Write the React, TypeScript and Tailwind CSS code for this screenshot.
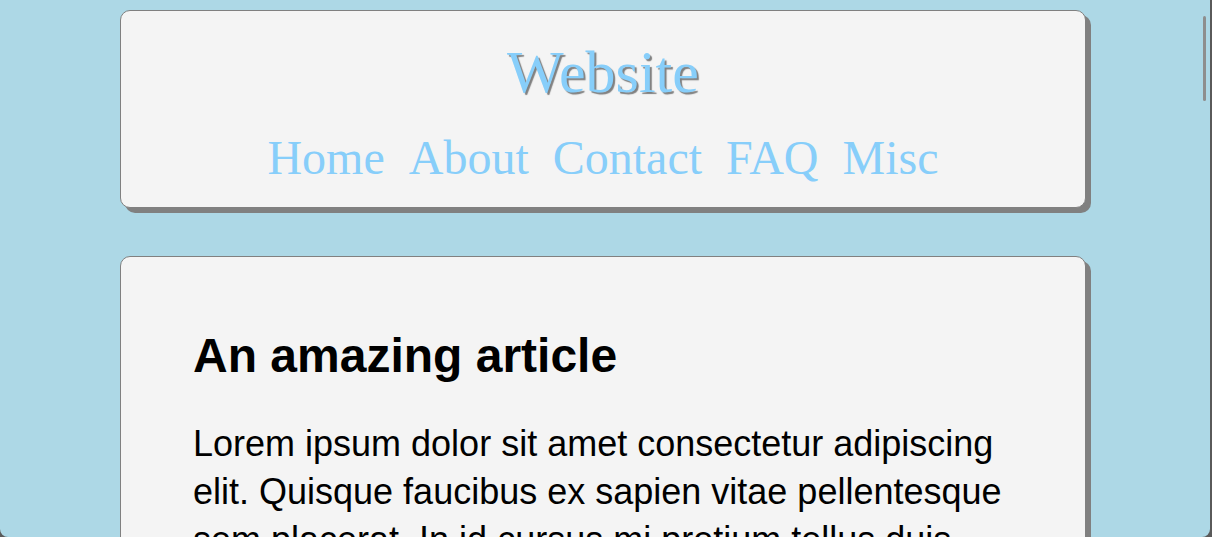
import React from 'react';

const links = ['Home', 'About', 'Contact', 'FAQ', 'Misc'];

const App = () => {
  return (
    <div className="h-[537px] w-[1212px] bg-[#5a5a5a] overflow-hidden">
      <div className="relative h-full w-[1210px] overflow-hidden rounded-b-[8px] bg-[#add8e6]">
        {/* Header */}
        <header className="ml-[120px] mt-[10px] w-[966px] rounded-[10px] border border-[#808080] bg-[#f4f4f4] pt-[31px] pb-[25px] shadow-[5px_5px_0_#808080]">
          <h1 className="text-center font-['Liberation_Serif',serif] text-[60px] leading-[60px] text-[#87cefa] [text-shadow:2px_2px_1px_#808080]">
            Website
          </h1>
          <nav className="mt-[32px] flex justify-center gap-[24px] font-['Liberation_Serif',serif] text-[48px] leading-[48px] text-[#87cefa]">
            {links.map((l) => (
              <a key={l} href="#">{l}</a>
            ))}
          </nav>
        </header>

        {/* Article */}
        <article className="ml-[120px] mt-[48px] w-[966px] rounded-[10px] border border-[#808080] bg-[#f4f4f4] px-[72px] pt-[75px] pb-10 font-['Liberation_Sans',Arial,sans-serif] text-black shadow-[5px_5px_0_#808080]">
          <h2 className="text-[48px] font-bold leading-[48px]">An amazing article</h2>
          <p className="mt-[40px] text-[36px] leading-[48px]">
            Lorem ipsum dolor sit amet consectetur adipiscing elit. Quisque faucibus ex sapien vitae pellentesque sem placerat. In id cursus mi pretium tellus duis convallis. Tempus leo eu aenean sed diam urna tempor.
          </p>
        </article>

        {/* scrollbar thumb */}
        <div className="absolute right-[4px] top-[16px] h-[85px] w-[3px] rounded-full bg-[#8e8e8e]" />
      </div>
    </div>
  );
};

export default App;
